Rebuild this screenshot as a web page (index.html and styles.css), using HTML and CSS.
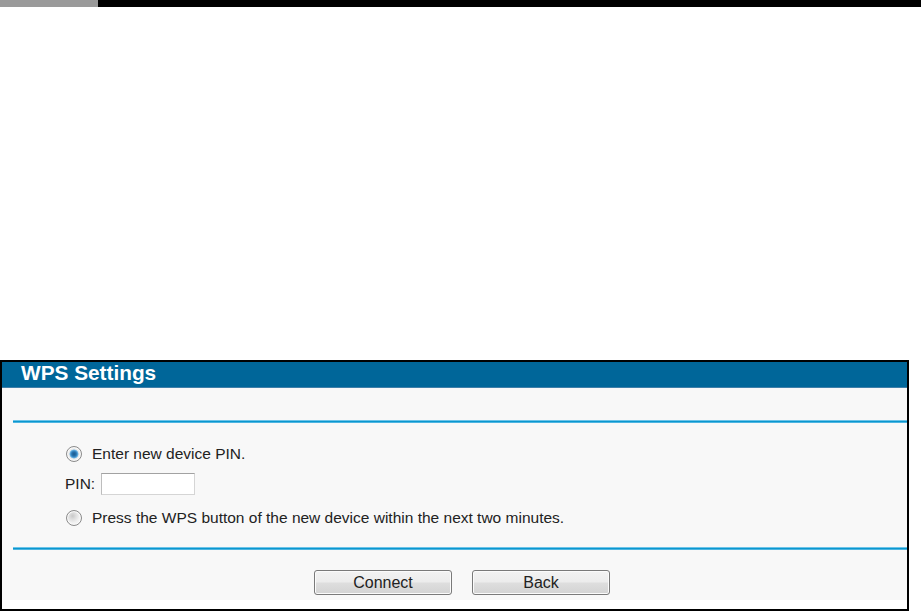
FILE: index.html
```html
<!DOCTYPE html>
<html>
<head>
<meta charset="utf-8">
<title>WPS Settings</title>
<link rel="stylesheet" href="styles.css">
</head>
<body>
<div class="topbar"><div class="topbar-gray"></div><div class="topbar-black"></div></div>
<div class="panel">
  <div class="panel-head">WPS Settings</div>
  <div class="panel-body">
    <div class="rule"></div>
    <div class="form">
      <label class="row row-radio"><input type="radio" name="mode" class="radio" checked><span>Enter new device PIN.</span></label>
      <div class="row row-pin"><span>PIN:</span><input type="text" class="pin"></div>
      <label class="row row-radio row-press"><input type="radio" name="mode" class="radio"><span>Press the WPS button of the new device within the next two minutes.</span></label>
    </div>
    <div class="rule rule-bottom"></div>
    <div class="buttons">
      <button class="btn">Connect</button>
      <button class="btn">Back</button>
    </div>
  </div>
  <div class="panel-foot"></div>
</div>
</body>
</html>
```
FILE: styles.css
```css
* { box-sizing: border-box; }
html, body { margin: 0; padding: 0; background: #fff; }
body {
  width: 921px;
  height: 611px;
  overflow: hidden;
  font-family: "Liberation Sans", Arial, sans-serif;
  color: #222;
}
.topbar { display: flex; height: 7px; }
.topbar-gray { width: 98px; background: #9a9a9a; }
.topbar-black { flex: 1; background: #000; }

.panel {
  margin-top: 353px;
  width: 909px;
  height: 251px;
  border: 2px solid #000;
  display: flex;
  flex-direction: column;
}
.panel-head {
  height: 26px;
  background: #006699;
  border-bottom: 1px solid #3f7fa9;
  color: #fff;
  font-weight: bold;
  font-size: 20.8px;
  line-height: 22px;
  padding-left: 19px;
}
.panel-body {
  height: 212px;
  background: #f8f8f8;
  padding-top: 32px;
  display: flex;
  flex-direction: column;
}
.panel-foot { flex: 1; background: #fff; }

.rule {
  height: 3px;
  margin-left: 11px;
  background: linear-gradient(to bottom, #6cc3e8 0, #6cc3e8 1px, #0a97cf 1px, #0a97cf 2px, #4db4e0 2px, #4db4e0 3px);
}
.rule-bottom { margin-top: 19px; }

.form {
  padding-left: 63px;
  font-size: 15.5px;
  line-height: 20px;
}
.row { display: flex; align-items: center; }
.row-radio { height: 20px; margin-top: 21px; }
.row-pin { height: 22px; margin-top: 9px; }
.row-press { margin-top: 13px; }

.radio {
  appearance: none;
  -webkit-appearance: none;
  width: 16px;
  height: 16px;
  margin: 0 10px 0 1px;
  border-radius: 50%;
  border: 1px solid #8b8b8b;
  box-shadow: inset 0 0 0 1px #fafafa;
  background: radial-gradient(circle at 40% 35%, #c9c9c9 0, #dcdcdc 3px, #f2f2f2 7px);
  flex: none;
}
.radio:checked {
  background: radial-gradient(circle at 50% 50%, #1a5a8e 0, #2770aa 2px, #3f8fcb 3.2px, #7fbfe6 4.2px, #e9e9e9 4.8px, #f6f6f6 7px);
}

.pin {
  width: 94px;
  height: 22px;
  margin: 0 0 0 6px;
  padding: 0;
  background: #fff;
  border: 1px solid #d5d5d5;
  border-top-color: #a2a2a2;
  border-left-color: #bdbdbd;
  font-family: inherit;
  font-size: 15px;
}

.buttons {
  display: flex;
  justify-content: center;
  gap: 20px;
  margin-top: 20px;
  padding-left: 15px;
}
.btn {
  width: 138px;
  height: 25px;
  padding: 0;
  border: 1px solid #7a7a7a;
  border-radius: 3px;
  background: linear-gradient(to bottom, #f3f3f3 0%, #ececec 48%, #dedede 52%, #d3d3d3 100%);
  box-shadow: inset 0 0 0 1px #fbfbfb;
  font-family: "Liberation Sans", Arial, sans-serif;
  font-size: 16px;
  line-height: 22px;
  color: #222;
}
```
